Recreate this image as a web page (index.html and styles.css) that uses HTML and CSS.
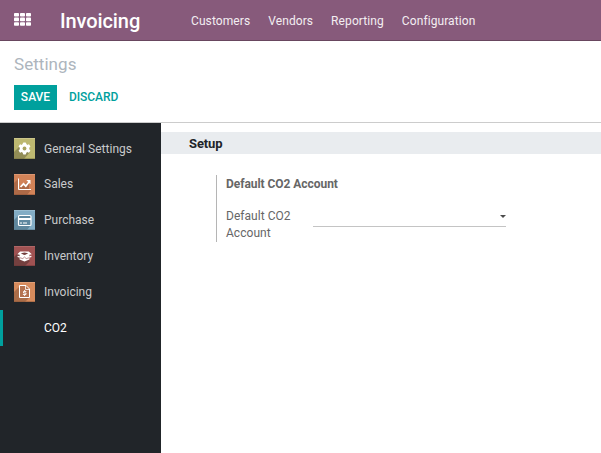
FILE: index.html
```html
<!DOCTYPE html>
<html lang="en">
<head>
<meta charset="utf-8">
<title>Settings - Invoicing</title>
<link rel="stylesheet" href="styles.css">
</head>
<body>
<header class="navbar">
  <svg class="apps" width="17" height="13" viewBox="0 0 17 13" fill="#fff">
    <rect x="0" y="0" width="5" height="3.6" rx=".8"/><rect x="6" y="0" width="5" height="3.6" rx=".8"/><rect x="12" y="0" width="5" height="3.6" rx=".8"/>
    <rect x="0" y="4.600" width="5" height="3.6" rx=".8"/><rect x="6" y="4.600" width="5" height="3.6" rx=".8"/><rect x="12" y="4.600" width="5" height="3.6" rx=".8"/>
    <rect x="0" y="9.200" width="5" height="3.6" rx=".8"/><rect x="6" y="9.200" width="5" height="3.6" rx=".8"/><rect x="12" y="9.200" width="5" height="3.6" rx=".8"/>
  </svg>
  <div class="brand">Invoicing</div>
  <nav class="menu"><a>Customers</a><a>Vendors</a><a>Reporting</a><a>Configuration</a></nav>
</header>
<section class="control-panel">
  <div class="breadcrumb">Settings</div>
  <div class="buttons"><button class="btn save">SAVE</button><button class="btn discard">DISCARD</button></div>
</section>
<main class="content">
  <aside class="sidebar">
    <div class="tab general">
      <svg class="icon" viewBox="0 0 21 21"><rect width="21" height="21" fill="#bdb870"/><path d="M6 8L0 14v7h10l6-7z" fill="#928d56"/><path d="M0 .5h21" stroke="#d3cf9c" stroke-opacity=".6"/><path d="M0 20.500h21" stroke="#77733f" stroke-opacity=".5"/>
        <g fill="#fff"><circle cx="10.500" cy="10.500" r="4.700"/><rect x="8.900" y="4.400" width="3.200" height="12.200" rx=".8"/><rect x="8.900" y="4.400" width="3.200" height="12.200" rx=".8" transform="rotate(60 10.500 10.500)"/><rect x="8.900" y="4.400" width="3.200" height="12.200" rx=".8" transform="rotate(120 10.500 10.500)"/></g><circle cx="10.500" cy="10.500" r="1.900" fill="#a9a35f"/></svg>
      <span>General Settings</span>
    </div>
    <div class="tab">
      <svg class="icon" viewBox="0 0 21 21"><rect width="21" height="21" fill="#d28358"/><path d="M4 5L0 9v12h13l4-5V6z" fill="#ae6a47"/><path d="M5 4.500h12V15H5z" fill="#d28358"/><path d="M6 13l9-6v8H6z" fill="#ae6a47"/><path d="M0 .5h21" stroke="#e3a583" stroke-opacity=".6"/><path d="M0 20.500h21" stroke="#8b5235" stroke-opacity=".5"/>
        <path d="M4.500 4.500V15.500H17" fill="none" stroke="#fff" stroke-width="1"/><path d="M6.500 13l3-3.200 2.300 2.300L15 8" fill="none" stroke="#fff" stroke-width="1.700"/><path d="M12.300 6h4.200v4.200z" fill="#fff"/></svg>
      <span>Sales</span>
    </div>
    <div class="tab">
      <svg class="icon" viewBox="0 0 21 20" preserveAspectRatio="none"><rect width="21" height="20" fill="#83adc5"/><path d="M4 6L0 10v10h13l4-5z" fill="#5f879d"/><path d="M0 .5h21" stroke="#a9c8d9" stroke-opacity=".6"/><path d="M0 19.500h21" stroke="#567789" stroke-opacity=".5"/>
        <rect x="4.500" y="5.500" width="12.500" height="10" rx="1" fill="#5f889f" stroke="#fff" stroke-width="1.200"/><path d="M4.500 9H17" stroke="#fff" stroke-width="2"/><path d="M6 13h2m1 0h4" stroke="#fff" stroke-width="1.200"/></svg>
      <span>Purchase</span>
    </div>
    <div class="tab">
      <svg class="icon" viewBox="0 0 21 20" preserveAspectRatio="none"><rect width="21" height="20" fill="#a05252"/><path d="M4 7l-4 4v9h11l5-5z" fill="#74403f"/><path d="M0 .5h21" stroke="#b97575" stroke-opacity=".6"/><path d="M0 19.500h21" stroke="#693336" stroke-opacity=".5"/>
        <path d="M6.200 5.500h8.600l3 2.800-2.400.5v4.800l-4.900 2-4.900-2V8.800l-2.400-.5z" fill="#fff"/><path d="M6.800 7.300l3.700-.9 3.700.9-3.700 1.900z" fill="#74403f"/><path d="M3.600 10.400l4.800 1.400 2.100-2.200 2.100 2.200 4.800-1.400" fill="none" stroke="#fff" stroke-width="1.200"/><path d="M5.600 11.700l3.200.9 1.700-1.600 1.700 1.600 3.200-.9" fill="none" stroke="#8b4646" stroke-width=".6"/></svg>
      <span>Inventory</span>
    </div>
    <div class="tab">
      <svg class="icon" viewBox="0 0 21 20" preserveAspectRatio="none"><rect width="21" height="20" fill="#d68b5c"/><path d="M6 4L0 10v10h11l5-5z" fill="#aa6d48"/><path d="M0 .5h21" stroke="#e5ae89" stroke-opacity=".6"/><path d="M0 19.500h21" stroke="#8c5838" stroke-opacity=".5"/>
        <path d="M5.500 3.500H12l3.500 3.500v8.500h-10z" fill="#b47350" stroke="#fff" stroke-width="1" stroke-linejoin="round"/><path d="M11.500 3.700v3.800h3.800" fill="none" stroke="#fff" stroke-width=".8"/><path d="M12.300 9.500H9.500v1.500h2.500v1.500H8.900" fill="none" stroke="#fff" stroke-width=".9"/><path d="M10.600 8v1.300m0 3.400V14" stroke="#fff" stroke-width=".9"/></svg>
      <span>Invoicing</span>
    </div>
    <div class="tab current"><span>CO2</span></div>
  </aside>
  <section class="settings">
    <h2 class="section-title">Setup</h2>
    <div class="setting">
      <div class="setting-title">Default CO2 Account</div>
      <div class="field">
        <label class="label">Default CO2 Account</label>
        <div class="select"><svg width="6" height="3" viewBox="0 0 6 3"><path d="M0 0h6L3 3z" fill="#4c4c4c"/></svg></div>
      </div>
    </div>
  </section>
</main>
</body>
</html>
```

FILE: styles.css
```css
* { box-sizing: border-box; }
body {
  margin: 0;
  height: 453px;
  display: flex;
  flex-direction: column;
  overflow: hidden;
  background: #fff;
  color: #666;
  font: 12px/17px Roboto, sans-serif;
}
.navbar {
  height: 41px;
  flex: none;
  display: flex;
  align-items: center;
  padding-left: 14px;
  background: #875a7b;
  border-bottom: 1px solid #68465f;
  color: #fff;
}
.apps { display: block; margin-bottom: 1px; }
.brand {
  width: 131px;
  margin-left: 29px;
  font-size: 20px;
  line-height: 40px;
  font-weight: 500;
  letter-spacing: -0.1px;
  padding-top: 2px;
}
.menu {
  display: flex;
  gap: 18px;
  color: #f3eef2;
  padding-top: 3px;
  letter-spacing: 0.09px;
}
.control-panel {
  height: 82px;
  flex: none;
  padding: 12px 14px 0;
  border-bottom: 1px solid #ccc;
}
.breadcrumb { font-size: 17px; line-height: 22px; letter-spacing: 0.05px; color: #adb5bd; }
.buttons { display: flex; margin-top: 10px; }
.btn {
  height: 25px;
  border: 0;
  padding: 0;
  font: 500 12px/25px Roboto, sans-serif;
}
.save { width: 43px; background: #00a09d; color: #fff; }
.discard { margin-left: 12px; background: none; color: #00a09d; letter-spacing: -0.07px; }
.content { flex: 1; display: flex; }
.sidebar { width: 161px; background: #212529; padding-top: 7px; }
.tab {
  height: 36px;
  display: flex;
  align-items: flex-start;
  gap: 9px;
  padding: 8px 0 0 14px;
  line-height: 20px;
  color: #c9cacb;
}
.icon { width: 21px; height: 20px; display: block; }
.general .icon, .general + .tab .icon { height: 21px; }
.general span { padding-top: 1px; letter-spacing: 0.03px; }
.current { border-left: 3px solid #00a09d; padding-left: 41px; color: #fff; }
.settings { flex: 1; padding-top: 9px; }
.section-title {
  margin: 0;
  height: 22px;
  padding-left: 28px;
  background: #e9ecef;
  color: #212529;
  font-size: 13px;
  line-height: 23px;
  font-weight: 700;
  letter-spacing: -0.1px;
}
.setting {
  width: 291px;
  height: 67px;
  margin: 21px 0 0 55px;
  padding: 1px 0 0 9px;
  border-left: 1px solid #b5b5b5;
}
.setting-title { font-weight: 700; letter-spacing: -0.05px; }
.field { display: flex; margin-top: 15px; }
.label { width: 87px; padding-right: 10px; letter-spacing: 0.04px; }
.select {
  width: 193px;
  height: 19px;
  display: flex;
  justify-content: flex-end;
  padding-top: 7px;
  border-bottom: 1px solid #c4c4c4;
}
```
